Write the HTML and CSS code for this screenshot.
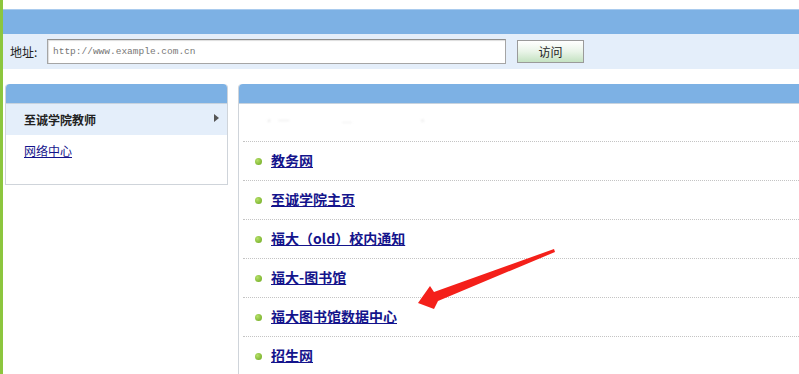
FILE: index.html
```html
<!DOCTYPE html>
<html lang="zh-CN">
<head>
    <meta charset="UTF-8">
    <title>网址导航</title>
    <link rel="stylesheet" href="styles.css">
</head>
<body>
<div class="page">
    <div class="top-gap"></div>
    <div class="top-bar"></div>

    <!-- Adresszeile -->
    <div class="address-bar">
        <span class="address-label">地址:</span>
        <input class="address-input" type="text" value="http://www.example.com.cn">
        <button class="visit-button">访问</button>
    </div>

    <div class="main">
        <div class="side-panel">
            <div class="panel-head"></div>
            <div class="side-item active">至诚学院教师<span class="side-arrow"></span></div>
            <div class="side-item"><a href="#">网络中心</a></div>
        </div>

        <div class="link-panel">
            <div class="panel-head"></div>
            <div class="blur-row">
                <span>· 一</span><span>　—　</span><span>　·</span>
            </div>
            <ul class="link-list">
                <li><a href="#">教务网</a></li>
                <li><a href="#">至诚学院主页</a></li>
                <li><a href="#">福大（old）校内通知</a></li>
                <li><a href="#">福大-图书馆</a></li>
                <li><a href="#">福大图书馆数据中心</a></li>
                <li><a href="#">招生网</a></li>
            </ul>
        </div>
    </div>

    <svg class="pointer" width="799" height="374" viewBox="0 0 799 374">
        <polygon points="418,303 430,286 434,292 554,249 555,252 438,301 434,309" fill="#f4201a"/>
    </svg>
</div>
</body>
</html>
```

FILE: styles.css
```css
/* Farben */
:root {
  --green-line: #8cc63e;
  --bar-blue: #7db1e4;
  --light-blue: #e4eefa;
  --panel-border: #cfd4da;
  --link-color: #14148c;
}

body {
  margin: 0;
  padding: 0;
  font-family: "Noto Sans CJK SC", "DejaVu Sans", sans-serif;
  font-size: 12px;
  background: #fff;
  overflow: hidden;
}

.page {
  position: relative;
  height: 374px;
  border-left: 3px solid var(--green-line);
}

.top-gap {
  height: 9px;
}

.top-bar {
  height: 25px;
  background-color: var(--bar-blue);
  border-top: 1px solid #a9cbee;
  box-sizing: border-box;
}

.address-bar {
  height: 35px;
  background-color: var(--light-blue);
  display: flex;
  align-items: center;
  padding-left: 7px;
}

.address-label {
  color: #222;
  font-size: 12px;
  width: 37px;
}

.address-input {
  width: 459px;
  height: 25px;
  box-sizing: border-box;
  border: 1px solid #a5a5a5;
  border-top-color: #8e8e8e;
  box-shadow: inset 1px 1px 1px #ddd;
  padding: 0 5px;
  font-family: "Liberation Mono", monospace;
  font-size: 9.5px;
  color: #777;
  background: #fff;
  outline: none;
}

.visit-button {
  margin-left: 11px;
  width: 67px;
  height: 23px;
  border: 1px solid #9a9a9a;
  background: linear-gradient(#ffffff, #e9f4e8 50%, #c4e2c2);
  font-family: "Noto Sans CJK SC", sans-serif;
  font-size: 12px;
  color: #222;
  padding: 0;
}

/* Layout */
.main {
  display: flex;
  gap: 10px;
  padding: 15px 0 0 2px;
  align-items: flex-start;
}

.side-panel {
  width: 223px;
  height: 101px;
  box-sizing: border-box;
  border: 1px solid var(--panel-border);
  border-top: none;
  border-radius: 4px 4px 0 0;
  flex-shrink: 0;
}

.panel-head {
  height: 19px;
  background-color: var(--bar-blue);
  border-radius: 4px 4px 0 0;
  border-bottom: 1px solid #c8d3de;
}

.side-item {
  height: 31px;
  display: flex;
  align-items: center;
  padding-left: 18px;
  position: relative;
}

.side-item.active {
  background-color: var(--light-blue);
  font-weight: bold;
  color: #222;
}

.side-item a {
  color: var(--link-color);
  font-size: 12px;
}

.side-arrow {
  position: absolute;
  right: 8px;
  top: 10px;
  border-left: 5px solid #555;
  border-top: 4px solid transparent;
  border-bottom: 4px solid transparent;
}

.link-panel {
  flex: 1;
  height: 300px;
  border-left: 1px solid var(--panel-border);
  border-radius: 4px 0 0 0;
}

.link-panel .panel-head {
  border-radius: 4px 0 0 0;
}

.blur-row {
  height: 38px;
  margin-left: 4px;
  border-bottom: 1px dotted #c4c4c4;
  color: #eaeaea;
  padding: 8px 0 0 20px;
  box-sizing: border-box;
  display: flex;
  gap: 40px;
}

.blur-row span {
  filter: blur(1px);
}

.link-list {
  list-style: none;
  margin: 0 0 0 4px;
  padding: 0;
}

.link-list li {
  height: 38px;
  border-bottom: 1px dotted #c4c4c4;
  display: flex;
  align-items: center;
  padding-left: 12px;
}

.link-list li::before {
  content: "";
  width: 7px;
  height: 7px;
  border-radius: 50%;
  background: radial-gradient(circle at 35% 35%, #b6e06a, #6aa61c);
  margin-right: 9px;
}

.link-list a {
  color: var(--link-color);
  font-size: 14px;
  font-weight: bold;
  position: relative;
  top: -1px;
}

.pointer {
  position: absolute;
  left: -3px;
  top: 0;
  pointer-events: none;
}
```
